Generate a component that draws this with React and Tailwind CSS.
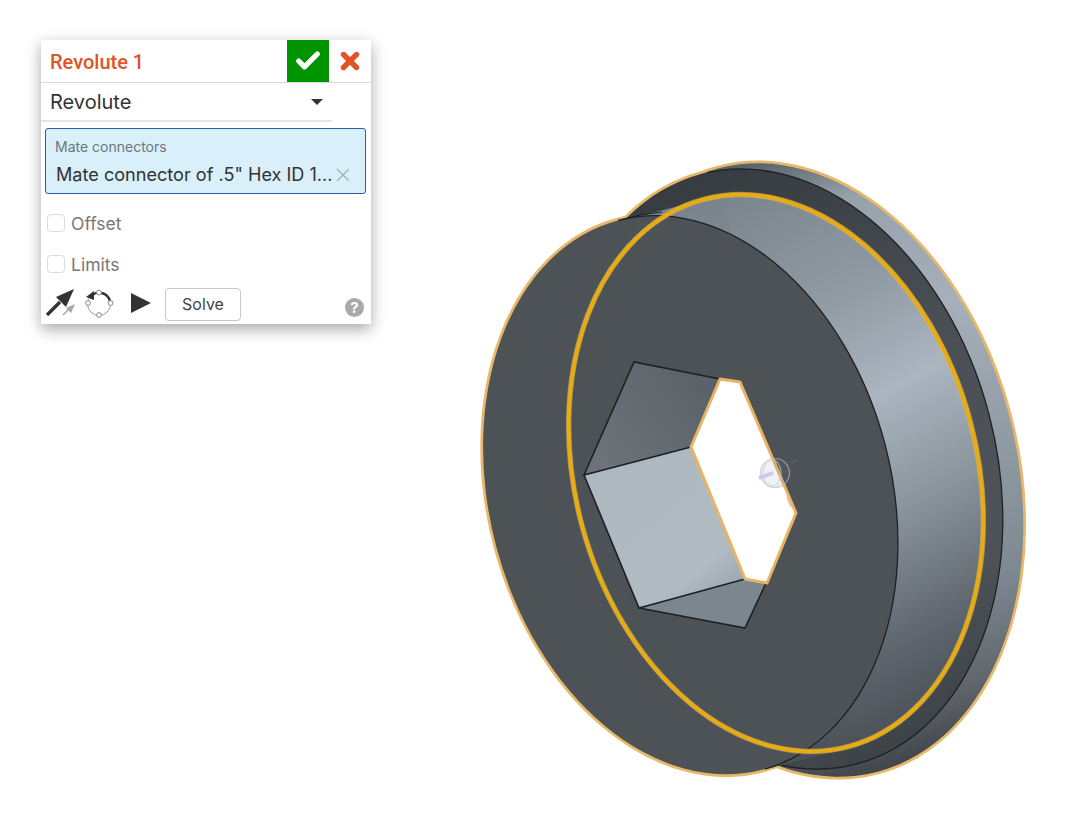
import { Check, X } from "lucide-react";

const ROT = (cx, cy) => `rotate(-14.8 ${cx} ${cy})`;

// front disk, bore ring, flange face and flange rim are tilted ellipses fitted to the edges
const FRONT = { cx: 690.5, cy: 495, rx: 201, ry: 284 };
const RING = { cx: 776, cy: 473, rx: 201, ry: 283 };
const FACE = { cx: 779, cy: 469, rx: 217, ry: 305 };
const RIM = { cx: 798, cy: 470, rx: 218, ry: 312 };

function Ell({ e, ...rest }) {
  return <ellipse cx={e.cx} cy={e.cy} rx={e.rx} ry={e.ry} transform={ROT(e.cx, e.cy)} {...rest} />;
}

function Part() {
  return (
    <svg className="absolute inset-0" width="1090" height="826" viewBox="0 0 1090 826">
      <defs>
        <linearGradient id="rim" gradientUnits="userSpaceOnUse" x1="798" y1="163" x2="798" y2="777">
          <stop offset="0" stopColor="#5a646b" />
          <stop offset="0.09" stopColor="#96a1ab" />
          <stop offset="0.3" stopColor="#a5b0ba" />
          <stop offset="0.75" stopColor="#7e8890" />
          <stop offset="0.9" stopColor="#61686f" />
          <stop offset="1" stopColor="#43484d" />
        </linearGradient>
        <linearGradient id="face" gradientUnits="userSpaceOnUse" x1="760" y1="170" x2="860" y2="770">
          <stop offset="0" stopColor="#363c40" />
          <stop offset="0.4" stopColor="#4a5055" />
          <stop offset="0.75" stopColor="#4d5358" />
          <stop offset="1" stopColor="#3c4246" />
        </linearGradient>
        <linearGradient id="barrel" gradientUnits="userSpaceOnUse" x1="740" y1="195" x2="860" y2="750">
          <stop offset="0" stopColor="#78838b" />
          <stop offset="0.25" stopColor="#8e99a2" />
          <stop offset="0.45" stopColor="#aab5bf" />
          <stop offset="0.65" stopColor="#8a949d" />
          <stop offset="0.85" stopColor="#60676f" />
          <stop offset="1" stopColor="#4a5056" />
        </linearGradient>
        <linearGradient id="hexTop" gradientUnits="userSpaceOnUse" x1="600" y1="460" x2="710" y2="380">
          <stop offset="0" stopColor="#6c7379" />
          <stop offset="1" stopColor="#5a6168" />
        </linearGradient>
        <linearGradient id="hexMid" gradientUnits="userSpaceOnUse" x1="610" y1="470" x2="720" y2="610">
          <stop offset="0" stopColor="#aeb8c1" />
          <stop offset="0.75" stopColor="#b1bbc4" />
          <stop offset="1" stopColor="#98a2ab" />
        </linearGradient>
        <clipPath id="faceArc">
          <polygon points="725,140 1050,140 1050,800 765,800 765,770 640,300" />
        </clipPath>
        <clipPath id="frontArc">
          <polygon points="618,140 1050,140 1050,800 765,800 765,770 618,222" />
        </clipPath>
      </defs>

      {/* union outline: stroked shapes under the same shapes filled */}
      <g fill="#e8b86a" stroke="#e8b86a" strokeWidth="5.5">
        <Ell e={RIM} />
        <Ell e={FACE} />
        <Ell e={FRONT} />
      </g>
      <Ell e={RIM} fill="url(#rim)" />
      <Ell e={FACE} fill="url(#face)" />
      <g clipPath="url(#faceArc)">
        <Ell e={FACE} fill="none" stroke="#1d2124" strokeWidth="1.3" />
      </g>
      <Ell e={RING} fill="url(#barrel)" />
      <path d="M 620 221 L 722 195 L 860 745 L 770 768 Z" fill="url(#barrel)" />
      <Ell e={FRONT} fill="#4c5256" />
      <g clipPath="url(#frontArc)">
        <Ell e={FRONT} fill="none" stroke="#1d2124" strokeWidth="1.3" />
      </g>
      <path d="M620 220 Q640 214 662 212" fill="none" stroke="#1d2124" strokeWidth="1" />

      <Ell e={RING} fill="none" stroke="#e8b86a" strokeWidth="5.5" opacity="0.55" />
      <Ell e={RING} fill="none" stroke="#e6ac12" strokeWidth="4" />

      {/* hex bore */}
      <polygon points="634,362 720,379 691,447 584,475" fill="url(#hexTop)" />
      <polygon points="584,475 691,447 745,579 639,608" fill="url(#hexMid)" />
      <polygon points="639,608 745,579 766,583 745,628" fill="#7c868e" />
      <g stroke="#1d2124" strokeWidth="1.6" strokeLinecap="round" fill="none">
        <path d="M720 379 L634 362 L584 475 L691 447" />
        <path d="M584 475 L639 608 L745 579" />
        <path d="M639 608 L745 628 L766 583" />
      </g>
      <polygon
        points="720,379 740,382 796,513 767,583 745,579 691,447"
        fill="#ffffff"
        stroke="#e8b463"
        strokeWidth="3"
        strokeLinejoin="round"
      />

      {/* mate connector gizmo */}
      <g fill="none" opacity="0.65">
        <circle cx="775" cy="473" r="14.5" fill="#7c8894" fillOpacity="0.18" stroke="#b4bdc6" strokeWidth="1.2" />
        <ellipse cx="772" cy="473" rx="9" ry="13" stroke="#c2cad2" strokeWidth="1.3" />
        <path d="M759 478 L773 473" stroke="#a9a9ea" strokeWidth="3.5" />
        <path d="M791 463 L798 460" stroke="#5c8a62" strokeWidth="1" />
        <path d="M787 497 L791 507" stroke="#f0a898" strokeWidth="2" />
      </g>
    </svg>
  );
}

function ArrowIcon() {
  return (
    <svg width="32" height="30" viewBox="0 0 32 30" className="shrink-0">
      <path d="M2 27 L15 14" stroke="#333" strokeWidth="3.4" fill="none" />
      <polygon points="29,1 11,9 21,19" fill="#333" />
      <path d="M18 27 L26 19" stroke="#a8a8a8" strokeWidth="1.6" fill="none" />
      <polygon points="30,16 21,20 26,25" fill="#a8a8a8" />
    </svg>
  );
}

function RevolveIcon() {
  return (
    <svg width="32" height="30" viewBox="0 0 32 30" className="shrink-0">
      <circle cx="15" cy="16" r="11.5" fill="none" stroke="#9a9a9a" strokeWidth="1" />
      <path d="M26 13 A11.5 11.5 0 0 0 8 7" fill="none" stroke="#333" strokeWidth="2.4" />
      <polygon points="2,9 10,3 10,12" fill="#333" />
      <g fill="#ffffff" stroke="#8a8a8a" strokeWidth="1">
        <circle cx="15" cy="4.5" r="2.4" />
        <circle cx="4" cy="15" r="2.4" />
        <circle cx="26.5" cy="15" r="2.4" />
        <circle cx="15" cy="27" r="2.4" />
      </g>
    </svg>
  );
}

function HelpIcon() {
  return (
    <div className="w-[19px] h-[19px] rounded-full bg-[#a9a9a9] text-white text-[15px] font-bold leading-[19px] text-center">
      ?
    </div>
  );
}

function Check2({ label }) {
  return (
    <div className="flex items-center h-[41px]">
      <div className="w-[18px] h-[18px] ml-[6px] -mt-[1px] rounded-[4px] border border-[#dcdcdc] bg-white" />
      <span className="ml-[6px] mt-[1px] text-[17.5px] text-[#777]">{label}</span>
    </div>
  );
}

export default function App() {
  return (
    <div className="relative w-[1090px] h-[826px] bg-white overflow-hidden font-['Inter',sans-serif]">
      <Part />
      <div className="absolute left-[41px] top-[40px] w-[330px] h-[284px] bg-white shadow-[0_5px_14px_rgba(0,0,0,0.35)] flex flex-col">
        <div className="flex h-[43px] shrink-0 border-b border-[#d5d8dc]">
          <div className="ml-[9px] flex-1 font-['Roboto',sans-serif] text-[20px] leading-[45px] font-medium text-[#e05426]">Revolute 1</div>
          <div className="w-[42px] h-[42px] bg-[#009400] flex items-center justify-center">
            <Check size={28} strokeWidth={4.5} color="#ffffff" />
          </div>
          <div className="w-[42px] h-[42px] flex items-center justify-center">
            <X size={26} strokeWidth={5} color="#e05426" />
          </div>
        </div>
        <div className="w-[291px] h-[39px] shrink-0 border-b-2 border-[#e4e4e4] flex items-center justify-between">
          <span className="ml-[9px] mt-[1px] text-[20px] text-[#333]">Revolute</span>
          <span className="mr-[9px] w-0 h-0 border-l-[6px] border-r-[6px] border-t-[6px] border-l-transparent border-r-transparent border-t-[#333]" />
        </div>
        <div className="mt-[6px] ml-[4px] w-[321px] h-[66px] shrink-0 rounded-[3px] border border-[#2a5fa8] bg-[#d9eff9] px-[9px] pt-[8px]">
          <div className="text-[14px] leading-[19px] text-[#6b7780]">Mate connectors</div>
          <div className="flex items-center mt-[7px] ml-[1px] h-[24px]">
            <span className="text-[18.1px] text-[#333] whitespace-nowrap">Mate connector of .5" Hex ID 1...</span>
            <X size={22} strokeWidth={1.3} color="#a4adb3" className="-ml-[1px] shrink-0" />
          </div>
        </div>
        <div className="mt-[9px]">
          <Check2 label="Offset" />
          <Check2 label="Limits" />
        </div>
        <div className="flex items-center mt-[1px] ml-[4px] h-[34px]">
          <ArrowIcon />
          <div className="ml-[7px]">
            <RevolveIcon />
          </div>
          <svg width="24" height="22" viewBox="0 0 24 22" className="ml-[13px] shrink-0">
            <polygon points="2,1 22,11 2,21" fill="#333" />
          </svg>
          <button className="ml-[12px] mt-[2px] w-[76px] h-[33px] rounded-[4px] border border-[#c8c8c8] bg-white text-[16px] text-[#444]">
            Solve
          </button>
          <div className="ml-auto mr-[7px] mt-[9px]">
            <HelpIcon />
          </div>
        </div>
      </div>
    </div>
  );
}
